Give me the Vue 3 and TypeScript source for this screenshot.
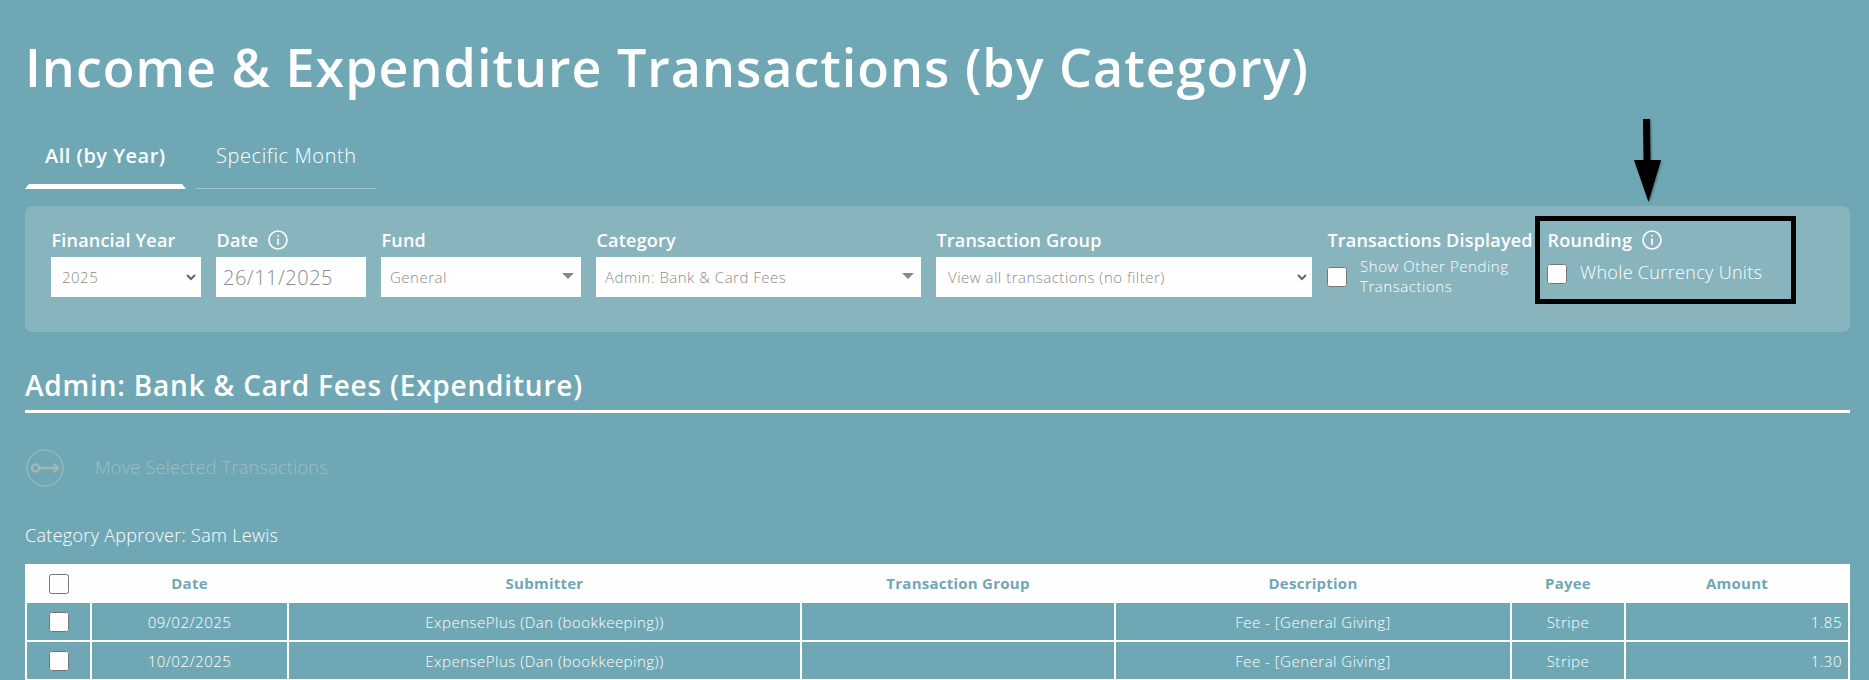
<script setup lang="ts">
interface Row {
  date: string
  submitter: string
  group: string
  description: string
  payee: string
  amount: string
}

const rows: Row[] = [
  { date: '09/02/2025', submitter: 'ExpensePlus (Dan (bookkeeping))', group: '', description: 'Fee - [General Giving]', payee: 'Stripe', amount: '1.85' },
  { date: '10/02/2025', submitter: 'ExpensePlus (Dan (bookkeeping))', group: '', description: 'Fee - [General Giving]', payee: 'Stripe', amount: '1.30' },
]
</script>

<template>
  <div class="page">
    <h1 class="title">Income &amp; Expenditure Transactions (by Category)</h1>

    <div class="tabs">
      <div class="tab active">All (by Year)</div>
      <div class="tab">Specific Month</div>
    </div>

    <div class="filters">
      <div class="field w-year">
        <div class="label">Financial Year</div>
        <div class="select-wrap">
          <select class="native"><option>2025</option></select>
          <svg class="chev" viewBox="0 0 10 7"><path d="M1 1l4 4 4-4" /></svg>
        </div>
      </div>
      <div class="field w-date">
        <div class="label">Date
          <svg class="info" viewBox="0 0 20 20"><circle cx="10" cy="10" r="9" /><path d="M10 8.500V15" /><path d="M10 5v1.600" /></svg>
        </div>
        <input class="date" type="text" value="26/11/2025" />
      </div>
      <div class="field w-fund">
        <div class="label">Fund</div>
        <div class="fake-select"><span>General</span><i class="tri"></i></div>
      </div>
      <div class="field w-cat">
        <div class="label">Category</div>
        <div class="fake-select"><span>Admin: Bank &amp; Card Fees</span><i class="tri"></i></div>
      </div>
      <div class="field w-group">
        <div class="label">Transaction Group</div>
        <div class="select-wrap">
          <select class="native wide"><option>View all transactions (no filter)</option></select>
          <svg class="chev" viewBox="0 0 10 7"><path d="M1 1l4 4 4-4" /></svg>
        </div>
      </div>
      <div class="field w-shown">
        <div class="label">Transactions Displayed</div>
        <label class="check-row small">
          <input type="checkbox" />
          <span>Show Other Pending Transactions</span>
        </label>
      </div>
      <div class="field w-round">
        <div class="annotation"></div>
        <div class="label">Rounding
          <svg class="info" viewBox="0 0 20 20"><circle cx="10" cy="10" r="9" /><path d="M10 8.500V15" /><path d="M10 5v1.600" /></svg>
        </div>
        <label class="check-row whole">
          <input type="checkbox" />
          <span>Whole Currency Units</span>
        </label>
      </div>
    </div>

    <svg class="callout" viewBox="0 0 30 84">
      <path d="M10 1H17L17.500 42H28L15.500 84L1 42H10.500Z" />
    </svg>

    <h2 class="section">Admin: Bank &amp; Card Fees (Expenditure)</h2>

    <div class="move">
      <svg class="move-icon" viewBox="0 0 38 38">
        <circle class="ring" cx="19" cy="19" r="18" />
        <circle cx="9.600" cy="19" r="3.600" />
        <path d="M13.200 19H32M27.500 14.500L32 19l-4.500 4.500" />
      </svg>
      <span class="move-text">Move Selected Transactions</span>
    </div>

    <p class="approver">Category Approver: Sam Lewis</p>

    <table class="grid">
      <colgroup>
        <col class="c1" /><col class="c2" /><col class="c3" /><col class="c4" /><col class="c5" /><col class="c6" /><col class="c7" />
      </colgroup>
      <thead>
        <tr>
          <th class="check-col"><input type="checkbox" /></th>
          <th>Date</th>
          <th>Submitter</th>
          <th>Transaction Group</th>
          <th>Description</th>
          <th>Payee</th>
          <th>Amount</th>
        </tr>
      </thead>
      <tbody>
        <tr v-for="row in rows" :key="row.date">
          <td><input type="checkbox" /></td>
          <td>{{ row.date }}</td>
          <td>{{ row.submitter }}</td>
          <td>{{ row.group }}</td>
          <td>{{ row.description }}</td>
          <td>{{ row.payee }}</td>
          <td class="num">{{ row.amount }}</td>
        </tr>
      </tbody>
    </table>
  </div>
</template>

<style>
html, body { margin: 0; background: #6fa8b4; }
</style>

<style scoped>
.page {
  position: relative;
  box-sizing: border-box;
  width: 1869px;
  height: 680px;
  overflow: hidden;
  padding: 37px 19px 0 25px;
  background: #6fa8b4;
  color: #fff;
  font-family: "Open Sans", "Liberation Sans", sans-serif;
}
.title {
  margin: 0;
  font-size: 52px;
  line-height: 60px;
  font-weight: 600;
  letter-spacing: 1px;
}
.tabs {
  display: flex;
  gap: 10px;
  margin-top: 38px;
}
.tab {
  position: relative;
  width: 180px;
  height: 54px;
  box-sizing: border-box;
  padding: 7px 20px 0;
  font-size: 20px;
  line-height: 28px;
  font-weight: 300;
  letter-spacing: .6px;
  border-bottom: 1px solid rgba(255, 255, 255, .35);
  white-space: nowrap;
}
.tab.active {
  width: 161px;
  font-weight: 600;
  letter-spacing: .5px;
  border-bottom: 0;
}
.tab.active::after {
  content: "";
  position: absolute;
  left: 0;
  right: 0;
  bottom: 0;
  height: 5px;
  background: #fff;
  clip-path: polygon(4px 0, calc(100% - 4px) 0, 100% 100%, 0 100%);
}
.filters {
  display: flex;
  gap: 15px;
  box-sizing: border-box;
  height: 126px;
  margin-top: 17px;
  padding: 22px 26px 0;
  border-radius: 7px;
  background: #88b4bd;
}
.field { flex: none; position: relative; }
.w-year, .w-date { width: 150px; }
.w-fund { width: 200px; }
.w-cat { width: 325px; }
.w-group { width: 376px; }
.w-shown { width: 205px; }
.w-round { width: 230px; }
.label {
  display: flex;
  align-items: center;
  gap: 10px;
  height: 24px;
  margin-bottom: 5px;
  padding-left: .5px;
  font-size: 18px;
  font-weight: 600;
  letter-spacing: .2px;
  white-space: nowrap;
}
.info {
  width: 20px;
  height: 20px;
  fill: none;
  stroke: #fff;
  stroke-width: 1.600;
}
.select-wrap { position: relative; }
.chev {
  position: absolute;
  right: 5px;
  top: 17px;
  width: 10px;
  height: 7px;
  fill: none;
  stroke: #666;
  stroke-width: 2;
  pointer-events: none;
}
.native, .date, .fake-select {
  box-sizing: border-box;
  display: flex;
  align-items: center;
  width: 100%;
  height: 40px;
  margin: 0;
  border: 0;
  border-radius: 0;
  background-color: #fff;
  color: #8a8a8a;
  font-family: inherit;
  font-size: 15px;
  font-weight: 300;
  letter-spacing: .5px;
}
.native {
  appearance: none;
  padding: 0 0 0 11px;
}
.native.wide { padding-left: 12px; }
.date {
  padding: 0 7px;
  font-size: 20px;
  outline: none;
}
.fake-select {
  position: relative;
  padding-left: 9px;
}
.tri {
  position: absolute;
  right: 7px;
  top: 16px;
  width: 0;
  height: 0;
  border-left: 6px solid transparent;
  border-right: 6px solid transparent;
  border-top: 6px solid #888;
}
.check-row {
  display: flex;
  align-items: center;
  font-weight: 300;
}
.check-row input {
  flex: none;
  width: 20px;
  height: 20px;
  margin: 0;
}
.check-row.small {
  gap: 13px;
  font-size: 15px;
  line-height: 20px;
  letter-spacing: .55px;
}
.check-row.small span { margin-top: -1px; }
.check-row.whole {
  gap: 13px;
  margin-top: 12px;
  font-size: 18px;
  line-height: 20px;
  letter-spacing: .33px;
}
.check-row.whole span { margin-top: -4px; }
.annotation {
  position: absolute;
  left: -12px;
  top: -12px;
  width: 261px;
  height: 88px;
  box-sizing: border-box;
  border: 5.500px solid #000;
  pointer-events: none;
}
.callout {
  position: absolute;
  left: 1633px;
  top: 118px;
  width: 30px;
  height: 84px;
  fill: #000;
  filter: drop-shadow(1px 1px 1px rgba(0, 0, 0, .35));
}
.section {
  margin: 0;
  padding-top: 33px;
  height: 45px;
  font-size: 28px;
  line-height: 40px;
  font-weight: 600;
  letter-spacing: .8px;
  border-bottom: 3px solid #fff;
}
.move {
  display: flex;
  align-items: center;
  gap: 31px;
  margin-top: 36px;
  padding-left: 1px;
  font-size: 18px;
  font-weight: 300;
  letter-spacing: .3px;
  color: #9fbdc3;
}
.move-text { margin-top: -2px; }
.move-icon {
  width: 38px;
  height: 38px;
  fill: none;
  stroke: #a3b8bc;
  stroke-width: 2.300;
}
.move-icon .ring {
  stroke: #95b4ba;
  stroke-width: 1.600;
}
.approver {
  margin: 36px 0 0;
  font-size: 18px;
  line-height: 24px;
  font-weight: 300;
  letter-spacing: .3px;
}
.grid {
  width: 1825px;
  margin-top: 17px;
  table-layout: fixed;
  border-collapse: collapse;
  font-size: 15px;
}
.c1 { width: 65px; }
.c2 { width: 197px; }
.c3 { width: 513px; }
.c4 { width: 314px; }
.c5 { width: 396px; }
.c6 { width: 114px; }
.c7 { width: 224px; }
.grid th {
  height: 33px;
  padding: 0 0 2px;
  background: #fff;
  border: 2px solid #fff;
  color: #6fa8b4;
  font-weight: 700;
  letter-spacing: .25px;
}
.grid th.check-col { padding: 0; }
.grid td {
  height: 37px;
  padding: 0;
  border: 2px solid #fff;
  text-align: center;
  font-weight: 300;
  letter-spacing: .5px;
}
.grid td.num {
  text-align: right;
  padding-right: 6px;
}
.grid input {
  display: block;
  width: 20px;
  height: 20px;
  margin: 0 auto;
}
</style>
